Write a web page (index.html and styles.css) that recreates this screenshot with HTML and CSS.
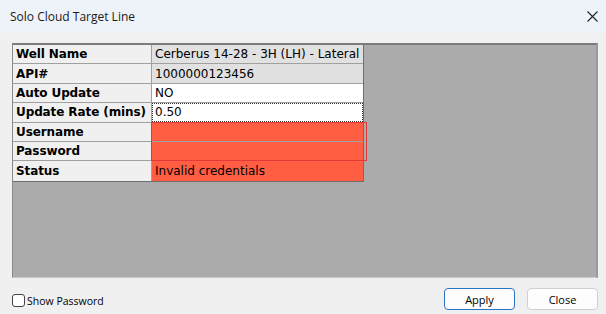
FILE: index.html
```html
<!DOCTYPE html>
<html>
<head>
<meta charset="utf-8">
<link rel="stylesheet" href="styles.css">
</head>
<body>
<div class="window">
  <div class="titlebar">
    <span class="title">Solo Cloud Target Line</span>
    <svg class="close-x" width="11" height="11" viewBox="0 0 11 11"><path d="M0.5 0.5 L10.5 10.5 M10.5 0.5 L0.5 10.5" stroke="#222" stroke-width="1.1" fill="none"/></svg>
  </div>
  <div class="content">
    <div class="grid-area">
      <div class="table">
        <div class="row"><div class="key">Well Name</div><div class="val ro">Cerberus 14-28 - 3H (LH) - Lateral</div></div>
        <div class="row"><div class="key">API#</div><div class="val ro">1000000123456</div></div>
        <div class="row"><div class="key">Auto Update</div><div class="val">NO</div></div>
        <div class="row"><div class="key">Update Rate (mins)</div><div class="val focus">0.50</div></div>
        <div class="cred">
          <div class="row"><div class="key">Username</div><div class="val err"></div></div>
          <div class="row"><div class="key">Password</div><div class="val err"></div></div>
          <div class="cred-outline"></div>
        </div>
        <div class="row"><div class="key">Status</div><div class="val err">Invalid credentials</div></div>
      </div>
    </div>
    <div class="footer">
      <label class="check"><span class="box"></span><span>Show Password</span></label>
      <div class="buttons">
        <button class="btn primary">Apply</button>
        <button class="btn">Close</button>
      </div>
    </div>
  </div>
</div>
</body>
</html>
```
FILE: styles.css
```css
html, body { margin: 0; padding: 0; }
body { width: 606px; height: 314px; background: #f0f0f0; font-family: "Open Sans", "Noto Sans", sans-serif; overflow: hidden; }
.window { display: flex; flex-direction: column; height: 314px; }
.titlebar { height: 33px; background: #eef2f9; display: flex; align-items: center; justify-content: space-between; padding: 0 8px 0 10px; }
.title { font-size: 12px; color: #1a1a1a; }
.content { flex: 1; display: flex; flex-direction: column; padding: 10px 8px 0 12px; }
.grid-area { height: 235px; background: #ababab; border-top: 2px solid #7c7c7c; border-left: 1px solid #8a8a8a; border-right: 2px solid #9a9a9a; border-bottom: 1px solid #c8c8c8; box-sizing: border-box; }
.table { width: 350px; display: flex; flex-direction: column; border-right: 1px solid #6e6e6e; border-bottom: 1px solid #6e6e6e; font-family: "DejaVu Sans", sans-serif; font-size: 12px; color: #000; }
.row { display: flex; height: 19.4px; border-bottom: 1px solid #a0a0a0; box-sizing: border-box; }
.row:last-child { border-bottom: none; }
.cred .row:last-child { border-bottom: 1px solid #a0a0a0; }
.key { width: 139px; background: #f0f0f0; font-weight: bold; padding-left: 3px; display: flex; align-items: center; border-right: 1px solid #a0a0a0; box-sizing: border-box; white-space: nowrap; letter-spacing: -0.1px; }
.val { flex: 1; background: #fff; padding-left: 3px; display: flex; align-items: center; white-space: nowrap; }
.val.ro { background: #e1e1e1; }
.val.focus { outline: 1px dotted #333; outline-offset: -1px; }
.val.err { background: #ff5e43; }
.cred { position: relative; }
.cred-outline { position: absolute; left: 138px; top: -1px; right: -4px; bottom: 0; border: 1px solid #e23a3a; pointer-events: none; }
.footer { display: flex; justify-content: space-between; align-items: center; height: 36px; padding-top: 6px; box-sizing: border-box; }
.check { display: flex; align-items: center; gap: 2px; font-size: 10.5px; color: #000; font-family: "Open Sans", sans-serif; margin-top: 3px; }
.box { width: 11px; height: 11px; border: 1px solid #444; border-radius: 3px; background: #fff; }
.buttons { display: flex; gap: 12px; }
.btn { width: 71px; height: 22px; background: #fdfdfd; border: 1px solid #d0d0d0; border-radius: 4px; font-family: "Open Sans", sans-serif; font-size: 11px; color: #000; padding: 0; }
.btn.primary { border: 1px solid #2a73c7; }
```
